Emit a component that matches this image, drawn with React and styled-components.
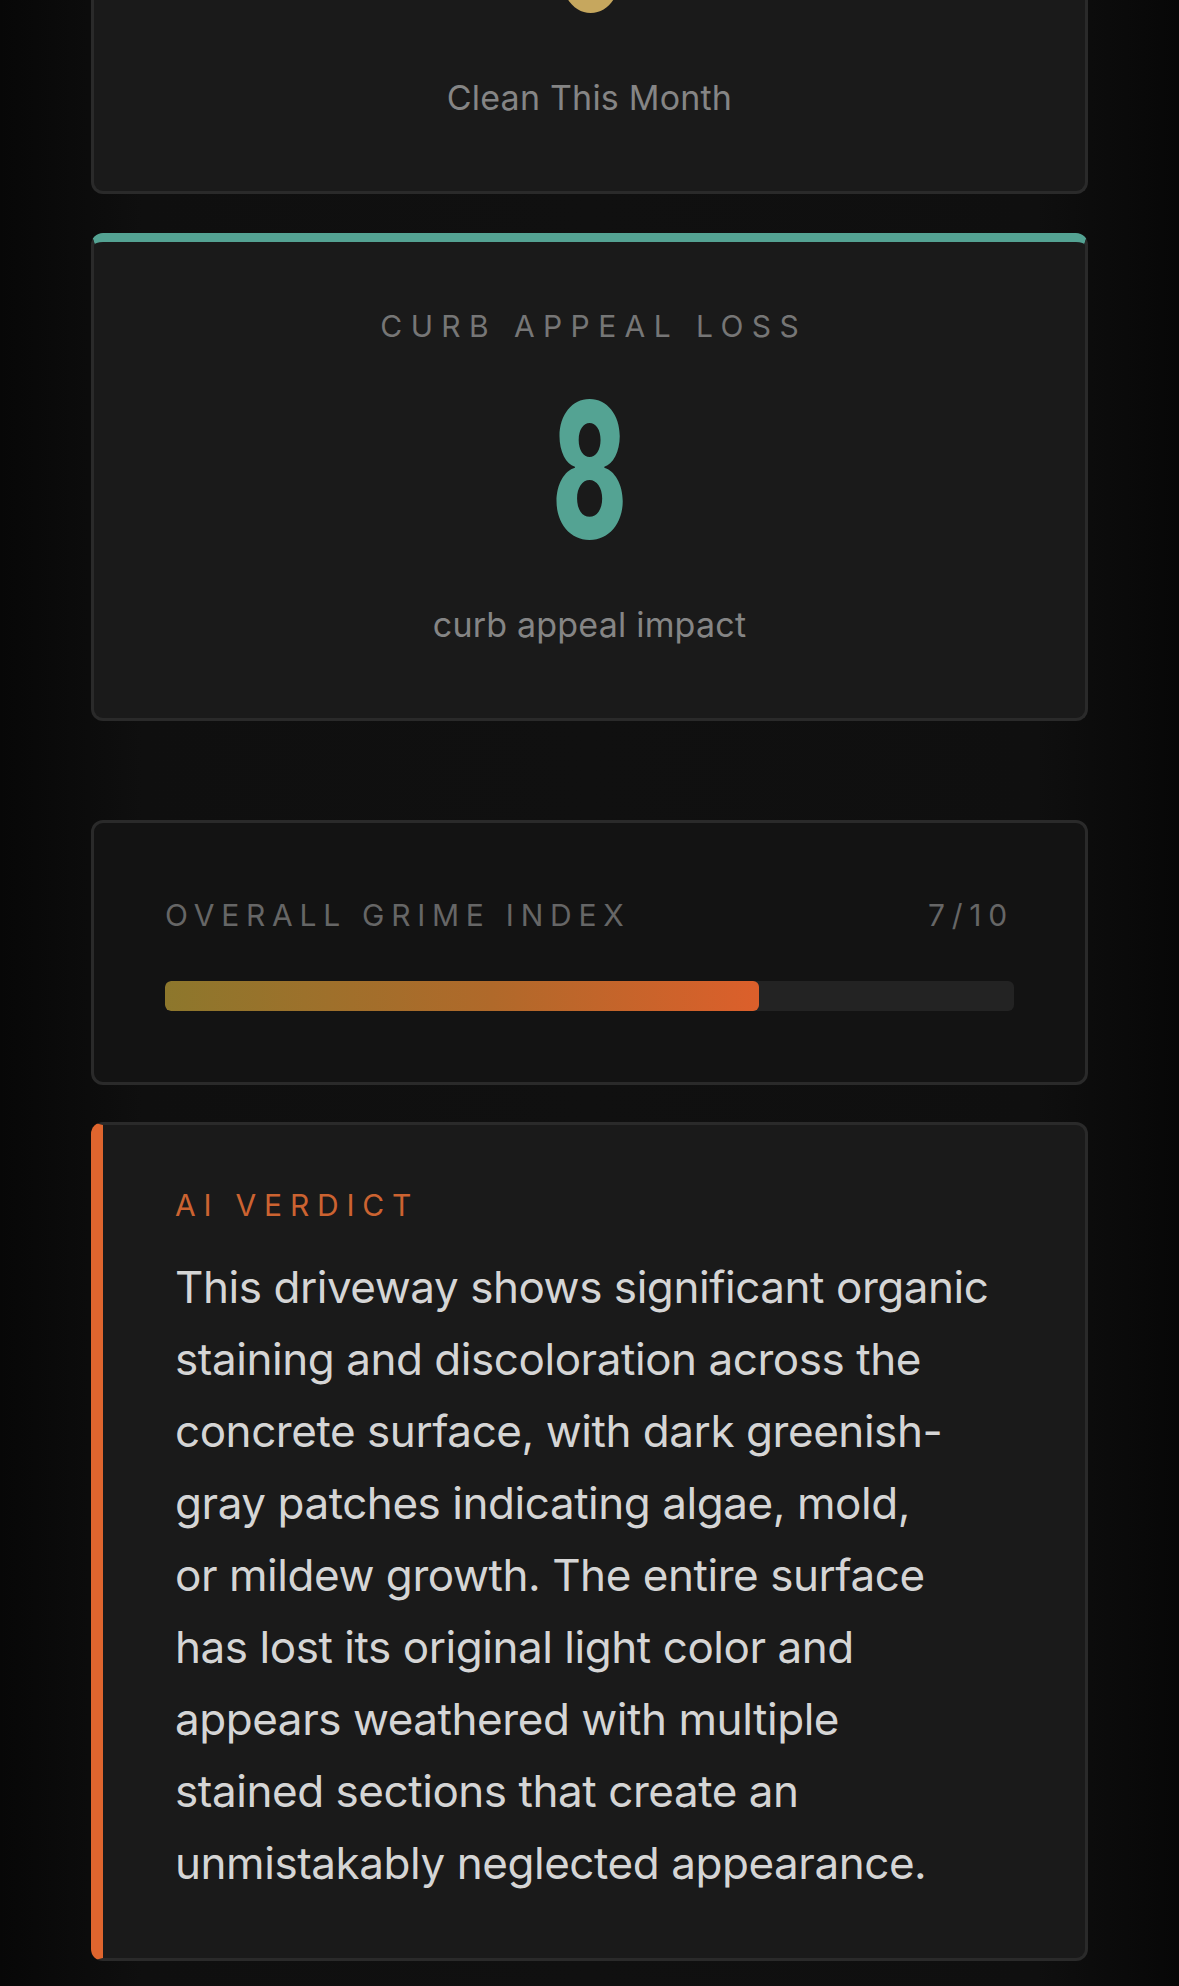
import styled, { createGlobalStyle } from 'styled-components';

const GlobalStyle = createGlobalStyle`
  html, body {
    margin: 0;
    padding: 0;
    background: #0d0d0d;
  }
  body {
    min-height: 1986px;
    overflow: hidden;
    font-family: Inter, 'Noto Sans', 'Liberation Sans', sans-serif;
    background: linear-gradient(90deg, #070707 0%, #0f0f0f 12%, #101010 50%, #0f0f0f 88%, #070707 100%);
  }
`;

const verdictLines = [
  'This driveway shows significant organic',
  'staining and discoloration across the',
  'concrete surface, with dark greenish-',
  'gray patches indicating algae, mold,',
  'or mildew growth. The entire surface',
  'has lost its original light color and',
  'appears weathered with multiple',
  'stained sections that create an',
  'unmistakably neglected appearance.',
];

const stats = [
  { label: 'CLEANING URGENCY', value: '6', caption: 'Clean This Month', accent: '#c6a75e' },
  { label: 'CURB APPEAL LOSS', value: '8', caption: 'curb appeal impact', accent: '#54a393' },
];

function App() {
  const grime = 7;
  return (
    <>
      <GlobalStyle />
      <Page>
        <StatList>
          {stats.map((s) => (
            <StatCard key={s.label} $accent={s.accent}>
              <StatLabel>{s.label}</StatLabel>
              <StatValueRow>
                <StatValue $accent={s.accent}>{s.value}</StatValue>
              </StatValueRow>
              <StatCaption>{s.caption}</StatCaption>
            </StatCard>
          ))}
        </StatList>

        <GrimeCard>
          <GrimeHeader>
            <GrimeLabel>OVERALL GRIME INDEX</GrimeLabel>
            <GrimeLabel>{grime}/10</GrimeLabel>
          </GrimeHeader>
          <Track>
            <Fill style={{ width: `${grime * 10}%` }} />
          </Track>
        </GrimeCard>

        <VerdictCard>
          <VerdictLabel>AI VERDICT</VerdictLabel>
          <VerdictText>
            {verdictLines.map((line) => (
              <VerdictLine key={line}>{line}</VerdictLine>
            ))}
          </VerdictText>
        </VerdictCard>
      </Page>
    </>
  );
}

export default App;

const Page = styled.main`
  display: flex;
  flex-direction: column;
  padding: 0 91px;
  margin-top: -294px;
`;

const StatList = styled.div`
  display: flex;
  flex-direction: column;
  gap: 39px;
`;

const StatCard = styled.section`
  display: flex;
  flex-direction: column;
  align-items: center;
  background: #1a1a1a;
  border: 3px solid #2a2a2a;
  border-top: 9px solid ${(p) => p.$accent};
  border-radius: 12px;
  padding: 66px 72px 73px;
`;

const StatLabel = styled.div`
  font-size: 30px;
  line-height: 36px;
  letter-spacing: 0.28em;
  margin-right: -0.28em;
  color: #767676;
  font-weight: 400;
`;

const StatValueRow = styled.div`
  display: flex;
  justify-content: center;
  height: 138px;
  margin-top: 57px;
`;

const StatValue = styled.span`
  display: inline-block;
  font-size: 189px;
  line-height: 138px;
  font-weight: 800;
  color: ${(p) => p.$accent};
  transform: scaleX(0.6);
`;

const StatCaption = styled.div`
  margin-top: 66px;
  font-size: 34px;
  line-height: 40px;
  letter-spacing: 0.2px;
  color: #858585;
`;

const GrimeCard = styled.section`
  margin-top: 99px;
  background: #131313;
  border: 3px solid #2a2a2a;
  border-radius: 12px;
  padding: 74px 71px 71px;
`;

const GrimeHeader = styled.div`
  display: flex;
  justify-content: space-between;
  align-items: center;
`;

const GrimeLabel = styled.span`
  font-size: 30px;
  line-height: 36px;
  letter-spacing: 0.225em;
  color: #666666;
`;

const Track = styled.div`
  margin-top: 48px;
  height: 30px;
  border-radius: 6px;
  background: #232323;
  overflow: hidden;
`;

const Fill = styled.div`
  height: 100%;
  border-radius: 6px;
  background: linear-gradient(90deg, #8d772c 0%, #b0692a 55%, #dc5f2b 100%);
`;

const VerdictCard = styled.section`
  margin-top: 37px;
  background: #1a1a1a;
  border: 3px solid #2a2a2a;
  border-left: 12px solid #df652e;
  border-radius: 12px;
  padding: 62px 72px 59px;
`;

const VerdictLabel = styled.div`
  font-size: 30px;
  line-height: 36px;
  letter-spacing: 0.26em;
  color: #cc6331;
`;

const VerdictText = styled.p`
  margin: 28px 0 0;
  font-size: 44px;
  line-height: 72px;
  letter-spacing: -0.45px;
  color: #d5d5d5;
`;

const VerdictLine = styled.span`
  display: block;
  white-space: nowrap;
`;
